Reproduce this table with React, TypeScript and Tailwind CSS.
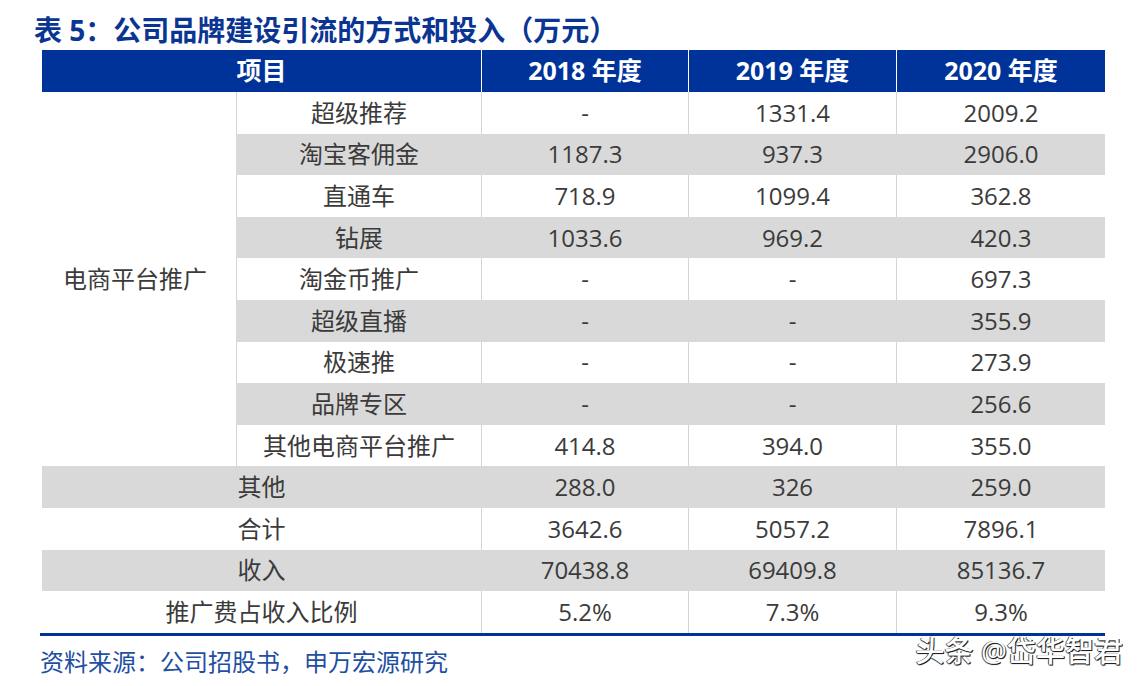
const FONT = "font-['Open_Sans','Noto_Sans_CJK_SC',sans-serif]";

const platformRows: [string, string, string, string][] = [
  ["超级推荐", "-", "1331.4", "2009.2"],
  ["淘宝客佣金", "1187.3", "937.3", "2906.0"],
  ["直通车", "718.9", "1099.4", "362.8"],
  ["钻展", "1033.6", "969.2", "420.3"],
  ["淘金币推广", "-", "-", "697.3"],
  ["超级直播", "-", "-", "355.9"],
  ["极速推", "-", "-", "273.9"],
  ["品牌专区", "-", "-", "256.6"],
  ["其他电商平台推广", "414.8", "394.0", "355.0"],
];

const totalRows: [string, string, string, string][] = [
  ["其他", "288.0", "326", "259.0"],
  ["合计", "3642.6", "5057.2", "7896.1"],
  ["收入", "70438.8", "69409.8", "85136.7"],
  ["推广费占收入比例", "5.2%", "7.3%", "9.3%"],
];

function Cell({ children, gray }: { children: React.ReactNode; gray: boolean }) {
  return (
    <div
      className={`flex items-center justify-center border-l ${
        gray ? "bg-[#d9d9d9] border-[#d9d9d9]" : "bg-white border-[#d4d4d4]"
      }`}
    >
      {children}
    </div>
  );
}

export default function App() {
  return (
    <div className={`w-[1144px] h-[686px] bg-white overflow-hidden ${FONT}`}>
      {/* title */}
      <div className="h-[50px] pt-[13px] pl-[34px] text-[28px] leading-[35px] font-bold text-[#0a3593] whitespace-nowrap">
        表 5：公司品牌建设引流的方式和投入（万元）
      </div>

      {/* table */}
      <div className="ml-[42px] grid w-[1063px] grid-cols-[194px_245px_207px_208px_209px] grid-rows-[42px_repeat(13,41.6px)] text-[24px] text-[#3b3b3b]">
        <div className="col-span-2 flex items-center justify-center bg-[#003399] text-[25px] font-bold text-white">项目</div>
        <div className="flex items-center justify-center border-l border-white bg-[#003399] text-[25px] font-bold text-white">2018 年度</div>
        <div className="flex items-center justify-center border-l border-white bg-[#003399] text-[25px] font-bold text-white">2019 年度</div>
        <div className="flex items-center justify-center border-l border-white bg-[#003399] text-[25px] font-bold text-white">2020 年度</div>

        <div className="col-start-1 row-start-2 row-span-9 flex items-center justify-center pr-[8px]">电商平台推广</div>
        {platformRows.map((r, i) => {
          const gray = i % 2 === 1;
          return (
            <div key={r[0]} className="col-start-2 col-span-4 grid grid-cols-[245px_207px_208px_209px]" style={{ gridRowStart: i + 2 }}>
              <Cell gray={gray}>{r[0]}</Cell>
              <Cell gray={gray}>{r[1]}</Cell>
              <Cell gray={gray}>{r[2]}</Cell>
              <Cell gray={gray}>{r[3]}</Cell>
            </div>
          );
        })}

        {totalRows.map((r, i) => {
          const gray = i % 2 === 0;
          return (
            <div key={r[0]} className="col-span-5 grid grid-cols-[439px_207px_208px_209px]" style={{ gridRowStart: i + 11 }}>
              <div className={`flex items-center justify-center ${gray ? "bg-[#d9d9d9]" : "bg-white"}`}>{r[0]}</div>
              <Cell gray={gray}>{r[1]}</Cell>
              <Cell gray={gray}>{r[2]}</Cell>
              <Cell gray={gray}>{r[3]}</Cell>
            </div>
          );
        })}
      </div>

      <div className="ml-[40px] h-[3px] w-[1065px] bg-[#003399]" />

      {/* footer */}
      <div className="relative ml-[40px] w-[1065px]">
        <div className="pt-[11px] text-[24px] leading-[30px] text-[#1f4fa3] whitespace-nowrap">
          资料来源：公司招股书，申万宏源研究
        </div>
        <div className="absolute right-[-18px] top-[-2px] text-[29px] leading-[34px] font-medium text-white whitespace-nowrap [text-shadow:1px_1px_0_#222,-1px_0_0_#555,0_1px_1px_#333]">
          头条 @岱华智君
        </div>
      </div>
    </div>
  );
}
